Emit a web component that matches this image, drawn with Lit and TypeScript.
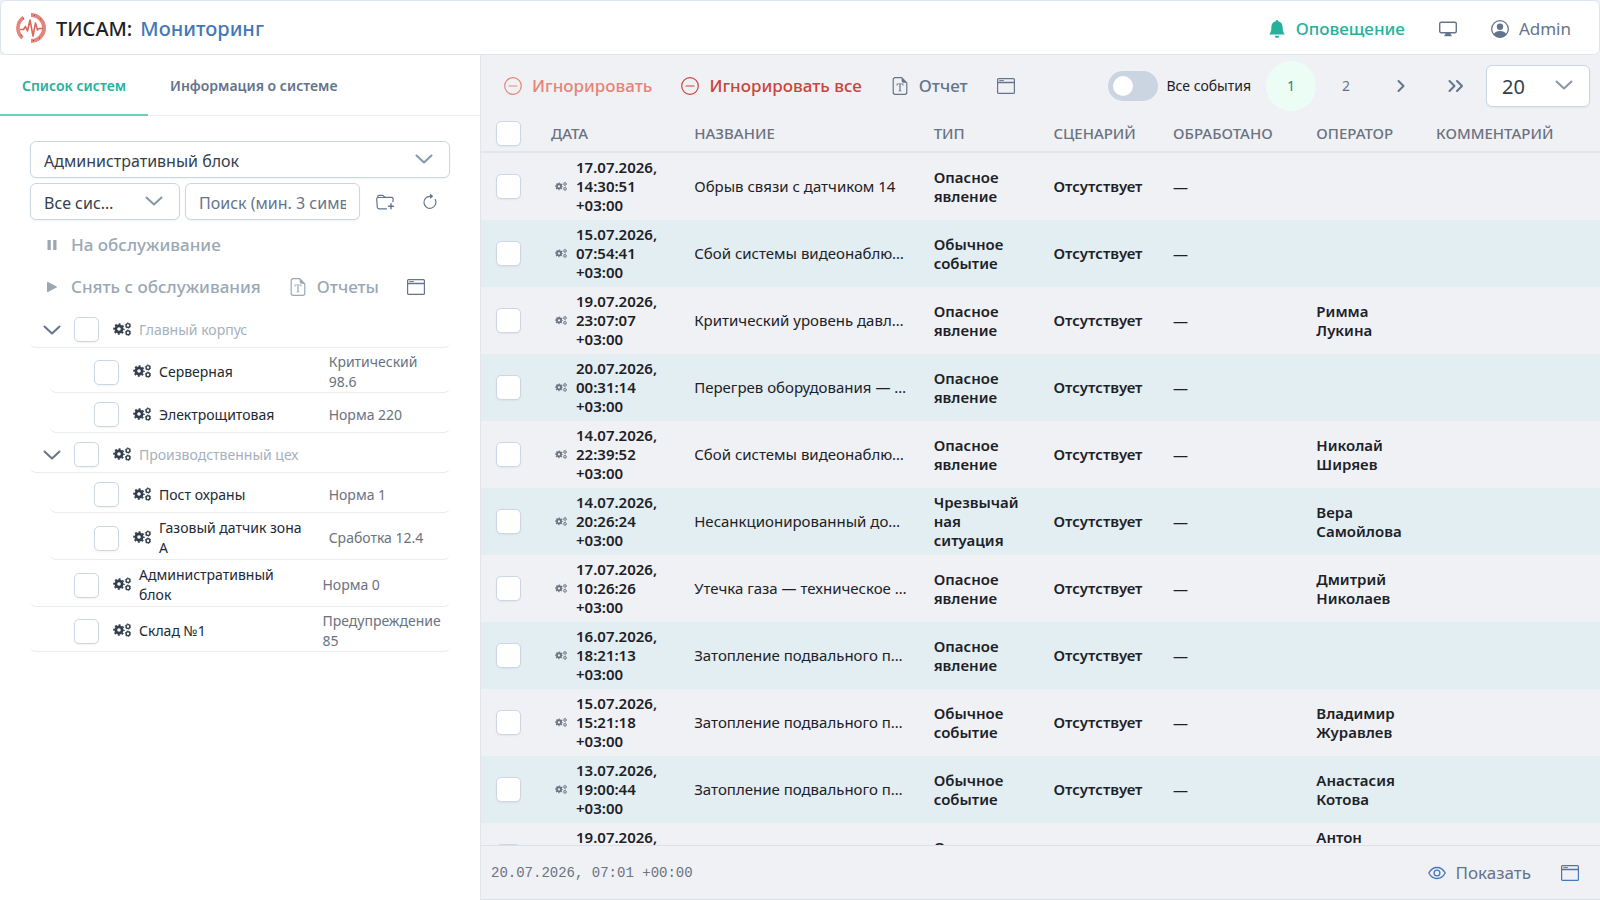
import { LitElement, html, css, svg, nothing } from "lit";
import { customElement, state } from "lit/decorators.js";

type Icon = keyof typeof shapes;

const shapes = {
  gears: svg`<g fill="none" stroke="currentColor"><circle cx="6" cy="8" r="3.150" stroke-width="2.700"/><circle cx="6" cy="8" r="4.900" stroke-width="1.800" stroke-dasharray="1.924" stroke-dashoffset=".962"/><circle cx="15" cy="4.500" r="1.900" stroke-width="1.400"/><circle cx="15" cy="4.500" r="2.800" stroke-width=".7" stroke-dasharray="1.466"/><circle cx="15" cy="11.700" r="1.900" stroke-width="1.400"/><circle cx="15" cy="11.700" r="2.800" stroke-width=".7" stroke-dasharray="1.466"/></g>`,
  down: svg`<path d="M1.500 5.500 9 12.500l7.500-7" fill="none" stroke="currentColor" stroke-width="2" stroke-linecap="round" stroke-linejoin="round"/>`,
  right: svg`<path d="M6.500 4l5 5-5 5" fill="none" stroke="currentColor" stroke-width="2" stroke-linecap="round" stroke-linejoin="round"/>`,
  last: svg`<path d="M2.500 4l5 5-5 5M10 4l5 5-5 5" fill="none" stroke="currentColor" stroke-width="2" stroke-linecap="round" stroke-linejoin="round"/>`,
  minus: svg`<g fill="none" stroke="currentColor" stroke-width="1.200"><circle cx="9" cy="9" r="8.300"/><path d="M5 9h8" stroke-linecap="round"/></g>`,
  file: svg`<g fill="none" stroke="currentColor" stroke-width="1.200"><path d="M10.700.7H4.200a2 2 0 0 0-2 2v12.600a2 2 0 0 0 2 2h9.600a2 2 0 0 0 2-2V5.800z" stroke-linejoin="round"/></g><path d="M10.700.7v3.300a1.800 1.800 0 0 0 1.800 1.800h3.300z" fill="currentColor"/><path d="M5.700 6.600h6.600l.1 2.100h-.6c-.2-1.100-.4-1.400-1.500-1.400h-.7v5.700c0 .6.200.7 1 .8v.5H7.400v-.5c.8-.1 1-.2 1-.8V7.300h-.7c-1.100 0-1.300.3-1.500 1.400h-.6z" fill="currentColor"/>`,
  window: svg`<g fill="none" stroke="currentColor" stroke-width="1.200"><rect x=".6" y="1.600" width="16.800" height="14.800" rx="1"/><path d="M.6 5.500h16.800" stroke-width="1.500"/><path d="M2.300 3.600h4.500" stroke-width="1"/></g>`,
  folder: svg`<g fill="none" stroke="currentColor" stroke-linecap="round"><path d="M10.500 15.800H3a1.700 1.700 0 0 1-1.700-1.600L.7 6a1.500 1.500 0 0 1 1-1.500V3.700a1.400 1.400 0 0 1 1.400-1.400h3.200c1.500 0 1.700 2 3.200 2H15.600a1.500 1.500 0 0 1 1.500 1.700l-.2 2.700M1.700 4.500h7.500" stroke-width="1.200"/><path d="M12.500 13.200h5M15 10.700v5" stroke-width="1.400"/></g>`,
  refresh: svg`<path d="M9 3.300a6 6 0 1 0 5.300 3.300" fill="none" stroke="currentColor" stroke-width="1.200" stroke-linecap="round"/><path d="M9 .6v5.300l3.300-2.600z" fill="currentColor"/>`,
  pause: svg`<path d="M4.500 4h3.300v10H4.500zM10.200 4h3.300v10h-3.300z" fill="currentColor"/>`,
  play: svg`<path d="M4.500 4.200v9.600L13.600 9z" fill="currentColor" stroke="currentColor" stroke-linejoin="round"/>`,
  bell: svg`<path d="M9 18a2.200 2.200 0 0 0 2.200-2.200H6.800A2.200 2.200 0 0 0 9 18zM9 0a1.200 1.200 0 0 0-1.200 1.200C5 1.800 3.400 4 3.400 6.800c0 4.200-.9 6.200-2.200 7.700h15.600c-1.300-1.500-2.200-3.500-2.200-7.700 0-2.800-1.600-5-4.400-5.600A1.200 1.200 0 0 0 9 0z" fill="currentColor"/>`,
  monitor: svg`<rect x=".7" y="2.200" width="16.600" height="10.600" rx="1.500" fill="none" stroke="currentColor" stroke-width="1.400"/><path d="M6.500 13h5l.5 2.200h.8v1H5.200v-1H6z" fill="currentColor"/>`,
  user: svg`<circle cx="9" cy="9" r="8.300" fill="none" stroke="currentColor" stroke-width="1.300"/><circle cx="9" cy="6.800" r="3.200" fill="currentColor"/><path d="M2.600 14.200C3.900 11.900 6 11 9 11s5.100.9 6.400 3.200A8.500 8.500 0 0 1 9 17.600a8.500 8.500 0 0 1-6.400-3.400z" fill="currentColor"/>`,
  eye: svg`<g fill="none" stroke="currentColor" stroke-width="1.300"><path d="M.8 9S3.800 3.500 9 3.500 17.200 9 17.200 9 14.200 14.500 9 14.500.8 9 .8 9z"/><circle cx="9" cy="9" r="2.900"/></g>`,
};

const icon = (name: Icon, cls = "") =>
  html`<svg class="icon ${cls}" viewBox="0 0 18 18" aria-hidden="true">${shapes[name]}</svg>`;

interface SystemNode {
  name: string;
  status?: string;
  children?: SystemNode[];
}

const systems: SystemNode[] = [
  {
    name: "Главный корпус",
    children: [
      { name: "Серверная", status: "Критический 98.6" },
      { name: "Электрощитовая", status: "Норма 220" },
    ],
  },
  {
    name: "Производственный цех",
    children: [
      { name: "Пост охраны", status: "Норма 1" },
      { name: "Газовый датчик зона А", status: "Сработка 12.4" },
    ],
  },
  { name: "Административный блок", status: "Норма 0" },
  { name: "Склад №1", status: "Предупреждение 85" },
];

const danger = "Опасное явление";
const usual = "Обычное событие";

const events: [string, string, string, string, string][] = [
  ["17.07.2026,", "14:30:51", "Обрыв связи с датчиком 14", danger, ""],
  ["15.07.2026,", "07:54:41", "Сбой системы видеонаблюдения", usual, ""],
  ["19.07.2026,", "23:07:07", "Критический уровень давления", danger, "Римма Лукина"],
  ["20.07.2026,", "00:31:14", "Перегрев оборудования — серверная", danger, ""],
  ["14.07.2026,", "22:39:52", "Сбой системы видеонаблюдения", danger, "Николай Ширяев"],
  ["14.07.2026,", "20:26:24", "Несанкционированный доступ", "Чрезвычайная ситуация", "Вера Самойлова"],
  ["17.07.2026,", "10:26:26", "Утечка газа — техническое помещение", danger, "Дмитрий Николаев"],
  ["16.07.2026,", "18:21:13", "Затопление подвального помещения", danger, ""],
  ["15.07.2026,", "15:21:18", "Затопление подвального помещения", usual, "Владимир Журавлев"],
  ["13.07.2026,", "19:00:44", "Затопление подвального помещения", usual, "Анастасия Котова"],
  ["19.07.2026,", "11:12:09", "Обрыв связи с датчиком 7", danger, "Антон Преображенский"],
];

@customElement("app-root")
export class AppRoot extends LitElement {
  @state() private closed = new Set<string>();

  static styles = css`
    :host {
      display: flex;
      flex-direction: column;
      height: 100vh;
      overflow: hidden;
      background: #f0f1f5;
      color: #1c2127;
      font: 15px/20px "Noto Sans", "Open Sans", sans-serif;
    }
    * { box-sizing: border-box; }
    button, input, select {
      font: inherit;
      color: inherit;
      margin: 0;
    }
    button {
      display: flex;
      align-items: center;
      background: none;
      border: 0;
      padding: 0;
      cursor: pointer;
      white-space: nowrap;
    }
    .icon { width: 18px; height: 18px; flex: none; display: block; }
    .small { width: 12px; height: 12px; }

    .header {
      display: flex;
      align-items: center;
      height: 55px;
      flex: none;
      padding: 2px 28px 0 15px;
      background: #fff;
      border: 1px solid #dfe5ee;
      border-radius: 6px;
      font-size: 17px;
    }
    .logo { width: 30px; height: 30px; margin: 0 10px 2px 0; }
    .title {
      display: flex;
      gap: 8px;
      margin: 0;
      font-size: 20px;
      font-weight: 500;
      line-height: 28px;
    }
    .title a { color: #4477b7; text-decoration: none; }
    .account { display: flex; gap: 34px; margin-left: auto; color: #64748b; }
    .account button { gap: 10px; }
    .account .alert { color: #25b19b; font-weight: 500; }

    .body { flex: 1; min-height: 0; display: flex; }

    .side {
      width: 30%;
      flex: none;
      background: #fff;
      overflow: hidden;
    }
    .tabs { display: flex; border-bottom: 1px solid #eaecef; height: 61px; }
    .tabs button {
      padding: 2px 22px 0;
      margin-bottom: -1px;
      border-bottom: 2px solid transparent;
      font-size: 14px;
      font-weight: 600;
      color: #64748b;
    }
    .tabs .active { color: #25b19b; border-color: #72cdc1; }
    .panel { padding: 25px 30px; }
    .filters { display: grid; grid-template-columns: 150px 1fr 40px 40px; gap: 5px; }
    .filters .wide { grid-column: 1 / -1; }
    .filters button { justify-content: center; color: #64748b; }
    .pick { position: relative; display: block; }
    .pick .icon { position: absolute; right: 17px; top: 50%; margin-top: -10px; color: #8497ab; pointer-events: none; }
    .pick select, .search {
      width: 100%;
      height: 37px;
      border: 1px solid #ccd6e0;
      border-radius: 6px;
      background: #fff;
      padding: 2px 13px 0;
      font-size: 16px;
      color: #343f4d;
      box-shadow: 0 1px 2px #1212170d;
      appearance: none;
    }
    .pick select { padding-right: 60px; text-overflow: ellipsis; }
    .search::placeholder { color: #64748b; opacity: 1; }
    .actions {
      display: flex;
      flex-wrap: wrap;
      column-gap: 28px;
      padding: 4px 13px 0;
      font-size: 17px;
      font-weight: 500;
      color: #9aa8b5;
    }
    .actions button { height: 42px; gap: 10px; }
    .actions .first { width: 100%; }
    .actions .view { color: #64748b; }

    .tree, .tree ul { list-style: none; margin: 0; padding: 0; }
    .tree ul { padding-left: 20px; }
    .node {
      display: grid;
      grid-template-columns: 1fr 31%;
      align-items: center;
      min-height: 40px;
      padding: 4px 2px 0 13px;
      border-bottom: 1px solid #eaecef;
      border-radius: 6px;
      font-size: 14px;
    }
    .name { display: flex; align-items: center; padding: 1px 16px 1px 0; color: #212934; }
    .name > .icon { margin: 0 8px 0 14px; color: #343f4d; }
    .group .name { color: #a5b1bc; }
    .toggle { width: 18px; margin-right: 13px; flex: none; }
    .name button { color: #64748b; }
    .status { color: #6b7280; }
    .check {
      appearance: none;
      width: 25px;
      height: 25px;
      flex: none;
      display: block;
      border: 1px solid #ccd6e4;
      border-radius: 5px;
      background: #fff;
      box-shadow: 0 1px 2px #1212170d;
    }
    .check:checked { background: #25b19b; }

    .main {
      flex: 1;
      min-width: 0;
      display: flex;
      flex-direction: column;
      border-left: 1px solid #e2e6ea;
      border-bottom: 1px solid #dde1e6;
    }
    .bar {
      display: flex;
      align-items: center;
      height: 61px;
      flex: none;
      padding: 0 10px 0 23px;
      color: #64748b;
      font-size: 17px;
      font-weight: 500;
    }
    .bar button { gap: 10px; margin-right: 29px; }
    .bar .faded { color: #e58575; }
    .bar .danger { color: #c8453a; }
    .all {
      display: flex;
      align-items: center;
      gap: 8px;
      margin-left: auto;
      margin-right: 15px;
      font-size: 14px;
      font-weight: 400;
      color: #1c2127;
      white-space: nowrap;
    }
    .switch {
      appearance: none;
      width: 50px;
      height: 30px;
      padding: 5px;
      border-radius: 15px;
      background: #cbd5e1;
    }
    .switch::before {
      content: "";
      display: block;
      width: 20px;
      height: 20px;
      border-radius: 50%;
      background: #fff;
    }
    .switch:checked::before { margin-left: 20px; }
    .pages { display: flex; gap: 5px; margin-right: 5px; font-size: 14px; font-weight: 400; }
    .pages button { width: 50px; height: 50px; justify-content: center; margin: 0; border-radius: 50%; }
    .pages .active { background: #ecfdf5; color: #148a7a; }
    .size select { width: 104px; height: 42px; padding-left: 15px; font-size: 20px; font-weight: 400; }

    .scroll { flex: 1; min-height: 0; overflow: hidden; }
    table { width: 100%; table-layout: fixed; border-collapse: collapse; line-height: 19px; }
    .c-check { width: 58px; }
    .c-wide { width: 12.8%; }
    .c-name { width: 21.4%; }
    .c-short { width: 10.7%; }
    th, td { padding: 5px 16px 5px 12px; text-align: left; overflow-wrap: anywhere; }
    th { height: 36px; padding-top: 4px; border-bottom: 2px solid #e2e6ea; font-weight: 500; color: #6b7280; white-space: nowrap; }
    th:first-child, td:first-child { padding-left: 15px; }
    td { font-weight: 600; height: 67px; }
    tbody tr:nth-child(even) { background: #e3eef2; }
    .date { display: flex; align-items: center; gap: 9px; padding-left: 4px; margin-right: -12px; }
    .date .icon { color: #6b7280; }
    td.label { padding-right: 15px; font-weight: 400; white-space: nowrap; overflow: hidden; text-overflow: ellipsis; }

    .footer {
      display: flex;
      align-items: center;
      flex: none;
      height: 54px;
      padding: 0 21px 0 10px;
      border-top: 1px solid #dde1e6;
      color: #6b7280;
    }
    .clock { font: 14px/20px "Liberation Mono", monospace; margin-right: auto; }
    .footer button { gap: 10px; margin-left: 30px; font-size: 17px; font-weight: 400; color: #64748b; }
    .footer .icon { color: #4477b7; }
  `;

  private flip(name: string) {
    const next = new Set(this.closed);
    if (!next.delete(name)) next.add(name);
    this.closed = next;
  }

  private node(n: SystemNode): unknown {
    const open = !this.closed.has(n.name);
    return html`<li>
      <div class="node ${n.children ? "group" : ""}">
        <div class="name">
          ${n.children
            ? html`<button class="toggle" aria-label="Свернуть" aria-expanded=${open} @click=${() => this.flip(n.name)}>${icon("down")}</button>`
            : html`<span class="toggle"></span>`}
          <input class="check" type="checkbox" aria-label=${n.name} />
          ${icon("gears")}
          <span>${n.name}</span>
        </div>
        ${n.status ? html`<span class="status">${n.status}</span>` : nothing}
      </div>
      ${n.children && open ? html`<ul>${n.children.map((c) => this.node(c))}</ul>` : nothing}
    </li>`;
  }

  render() {
    return html`
      <header class="header">
        <svg class="logo" viewBox="0 0 30 30" aria-hidden="true">
          <g fill="none" stroke="#e4857b">
            <path d="M15 2a13 13 0 0 1 0 26" stroke-width="4"/>
            <path d="M7.600 4.600A12.800 12.800 0 0 0 6.500 25" stroke-width="3.600"/>
            <path d="M4 16.500h3.500l2-3 2 4.500 2.500-11 3 16 2.500-13 2 7 1.500-1.500h4" stroke="#d8685d" stroke-width="1.600" stroke-linejoin="round"/>
          </g>
          <path d="M7 5.500h1M18 2.500h1M24 6h1M23 25h1M17 27.500h1M5 22h1" stroke="#a8403a" stroke-width="1"/>
        </svg>
        <h1 class="title"><span>ТИСАМ:</span><a href="#monitoring">Мониторинг</a></h1>
        <div class="account">
          <button class="alert">${icon("bell")}Оповещение</button>
          <button aria-label="Экран">${icon("monitor")}</button>
          <button>${icon("user")}Admin</button>
        </div>
      </header>
      <div class="body">
        <aside class="side">
          <div class="tabs" role="tablist">
            <button class="active" role="tab" aria-selected="true">Список систем</button>
            <button role="tab" aria-selected="false">Информация о системе</button>
          </div>
          <div class="panel">
            <div class="filters">
              <label class="pick wide"><select aria-label="Объект"><option>Административный блок</option></select>${icon("down")}</label>
              <label class="pick"><select aria-label="Системы"><option>Все системы</option></select>${icon("down")}</label>
              <input class="search" type="text" aria-label="Поиск" placeholder="Поиск (мин. 3 символа)" />
              <button aria-label="Добавить папку">${icon("folder")}</button>
              <button aria-label="Обновить">${icon("refresh")}</button>
            </div>
            <div class="actions">
              <button class="first">${icon("pause")}На обслуживание</button>
              <button>${icon("play")}Снять с обслуживания</button>
              <button>${icon("file")}Отчеты</button>
              <button class="view" aria-label="Окно">${icon("window")}</button>
            </div>
            <ul class="tree">${systems.map((n) => this.node(n))}</ul>
          </div>
        </aside>
        <main class="main">
          <div class="bar">
            <button class="faded">${icon("minus")}Игнорировать</button>
            <button class="danger">${icon("minus")}Игнорировать все</button>
            <button>${icon("file")}Отчет</button>
            <button aria-label="Окно">${icon("window")}</button>
            <label class="all"><input class="switch" type="checkbox" role="switch" />Все события</label>
            <nav class="pages" aria-label="Страницы">
              <button class="active" aria-current="page">1</button>
              <button>2</button>
              <button aria-label="Следующая">${icon("right")}</button>
              <button aria-label="Последняя">${icon("last")}</button>
            </nav>
            <label class="pick size"><select aria-label="Строк на странице"><option>20</option></select>${icon("down")}</label>
          </div>
          <div class="scroll">
            <table>
              <colgroup>
                <col class="c-check" /><col class="c-wide" /><col class="c-name" /><col class="c-short" />
                <col class="c-short" /><col class="c-wide" /><col class="c-short" /><col />
              </colgroup>
              <thead>
                <tr>
                  <th><input class="check" type="checkbox" aria-label="Выбрать все" /></th>
                  <th>ДАТА</th><th>НАЗВАНИЕ</th><th>ТИП</th><th>СЦЕНАРИЙ</th><th>ОБРАБОТАНО</th><th>ОПЕРАТОР</th><th>КОММЕНТАРИЙ</th>
                </tr>
              </thead>
              <tbody>
                ${events.map(([day, time, name, type, operator]) => html`<tr>
                  <td><input class="check" type="checkbox" aria-label=${name} /></td>
                  <td><div class="date">${icon("gears", "small")}<span>${day} ${time} +03:00</span></div></td>
                  <td class="label">${name}</td>
                  <td>${type}</td>
                  <td>Отсутствует</td>
                  <td>—</td>
                  <td>${operator}</td>
                  <td></td>
                </tr>`)}
              </tbody>
            </table>
          </div>
          <footer class="footer">
            <time class="clock">20.07.2026, 07:01 +00:00</time>
            <button>${icon("eye")}Показать</button>
            <button aria-label="Окно">${icon("window")}</button>
          </footer>
        </main>
      </div>
    `;
  }
}
